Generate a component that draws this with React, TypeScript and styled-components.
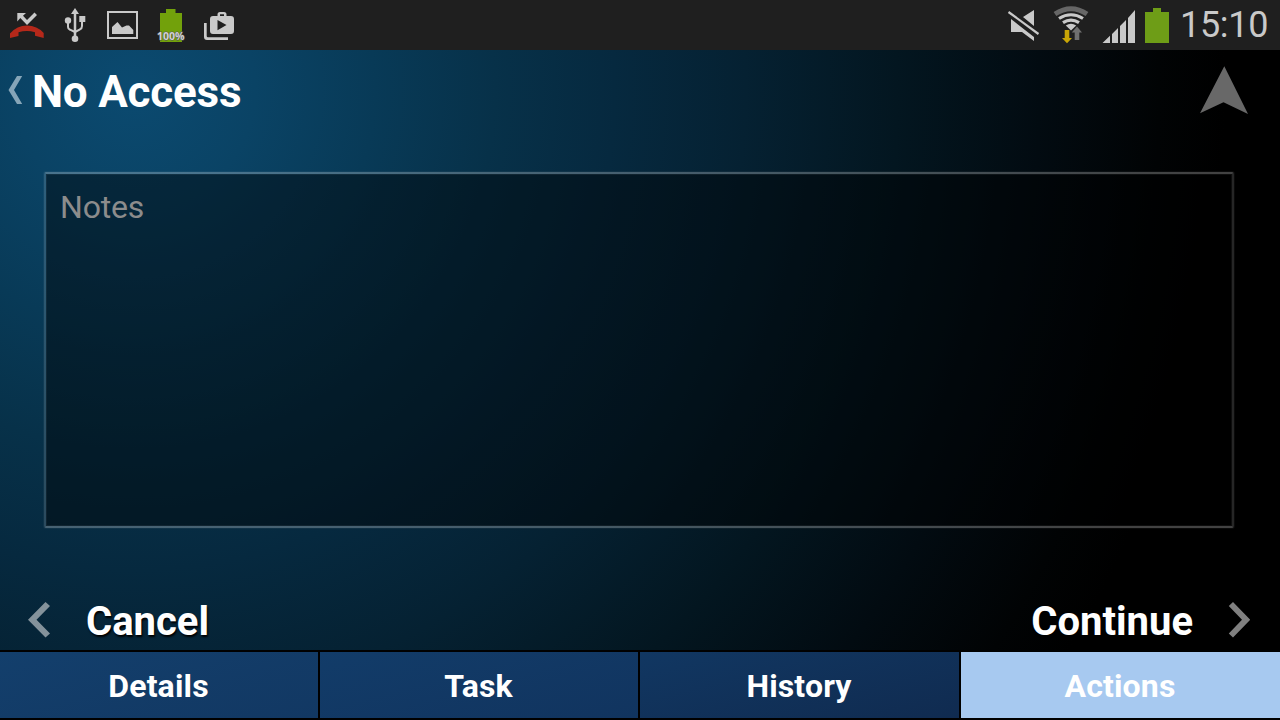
import React from "react";
import styled, { createGlobalStyle } from "styled-components";

const GlobalStyle = createGlobalStyle`
  * { box-sizing: border-box; }
  body { margin: 0; background: #000; font-family: Roboto, "Liberation Sans", sans-serif; }
  svg { display: block; flex: none; }
`;

const Screen = styled.div`
  width: 1280px;
  height: 720px;
  display: flex;
  flex-direction: column;
  overflow: hidden;
`;

const StatusBar = styled.header`
  height: 50px;
  flex: none;
  display: flex;
  justify-content: space-between;
  background: #1f1f1f;
  color: #c9c9c9;
`;

const StatusGroup = styled.div`
  display: flex;
`;

const Clock = styled.time`
  width: 108px;
  padding-left: 8px;
  font-size: 36px;
  line-height: 50px;
  letter-spacing: -0.3px;
  white-space: nowrap;
`;

const Page = styled.main`
  flex: 1;
  display: flex;
  flex-direction: column;
  background: radial-gradient(circle 1090px at 135px 40px,
    #0b4a70 0%, #0a4365 11%, #083a57 22%, #073149 33%, #06293f 44%, #052132 56%, #031620 70%, #020b11 83%, #010304 94%, #000 100%);
`;

const TitleBar = styled.div`
  height: 122px;
  display: flex;
  padding: 16px 32px 0 8px;
`;

const Title = styled.h1`
  margin: 0 auto 0 9px;
  font-size: 44px;
  line-height: 52px;
  font-weight: 700;
  letter-spacing: -0.2px;
  color: #fff;
`;

const Notes = styled.textarea`
  display: block;
  flex: none;
  width: 1190px;
  height: 356px;
  margin: 0 0 1px 44px;
  padding: 14px 14px;
  resize: none;
  outline: none;
  border: 2px solid;
  border-color: rgba(255, 255, 255, 0.26) rgba(255, 255, 255, 0.15);
  border-radius: 2px;
  background: rgba(0, 0, 0, 0.43);
  background-clip: padding-box;
  box-shadow: inset 0 0 0 1px rgba(255, 255, 255, 0.05), 0 0 0 1px rgba(255, 255, 255, 0.04);
  font: 400 32px/38px Roboto, sans-serif;
  letter-spacing: -0.2px;
  color: #fff;
  &::placeholder { color: #8c8c8c; opacity: 1; }
`;

const Wizard = styled.nav`
  flex: 1;
  display: flex;
  justify-content: space-between;
  padding: 73px 30px 0 28px;
`;

const WizardButton = styled.button`
  display: flex;
  gap: 35px;
  height: 48px;
  padding: 0;
  border: 0;
  background: none;
  color: #fff;
  font: 700 40px/40px Roboto, sans-serif;
  text-shadow: 1px 2px 2px #000;
`;

const Tabs = styled.nav`
  height: 70px;
  flex: none;
  display: grid;
  grid-template-columns: 318px 318px 319px 319px;
  gap: 2px;
  padding: 2px 0;
  background: #000;
`;

const Tab = styled.button<{ $from: string; $to: string }>`
  border: 0;
  padding: 2px 1px 0 0;
  background: linear-gradient(165deg, ${(p) => p.$from}, ${(p) => p.$to});
  color: #fff;
  font: 700 32px/38px Roboto, sans-serif;
  letter-spacing: 0.15px;
`;

const tabs = [
  { label: "Details", from: "#133f6c", to: "#123863" },
  { label: "Task", from: "#123c69", to: "#11345f" },
  { label: "History", from: "#113762", to: "#102b50" },
  { label: "Actions", from: "#a7c9f0", to: "#a7c9f0" },
];

const Notifications = () => (
  <svg width="250" height="50" viewBox="0 0 250 50" fill="#c9c9c9">
    <path d="M10 38 V33.5 Q17 25.5 27 25.5 Q37 25.5 43.7 33 V38 L35 35.7 V32.3 Q27 29.8 18.5 32.3 V36 Z" fill="#b5281a" />
    <path d="M17.3 13 H26 L23 15.7 L27 20 L34.5 12.5 L37 15 L27 25 L20.3 18 L17.3 21.5 Z" />
    <g fill="none" stroke="#c9c9c9" strokeWidth="2">
      <path d="M75 12 V38" strokeWidth="2.5" />
      <path d="M68 21 V27 Q68 29 70 29.7 L75 32 M82 20 V26 Q82 28.5 80 29.3 L75 32" />
    </g>
    <path d="M75 8 L79 14 H71 Z" />
    <circle cx="68" cy="20.5" r="3.2" />
    <circle cx="75" cy="38.7" r="3.3" />
    <path d="M79.3 16 H85.3 V22 H79.3 Z" />
    <path d="M108 12 H137 V38 H108 Z" fill="none" stroke="#c9c9c9" strokeWidth="2" />
    <path d="M112 34 V27 L117.5 22 L122 27.5 L126.5 25.5 H129 L133.3 30 V34 Z" />
    <path d="M160 13 H166 V9 H175.5 V13 H182 V42 H160 Z" fill="#72a10b" />
    <text x="157" y="40" textLength="27.5" lengthAdjust="spacingAndGlyphs" fontFamily="Open Sans" fontSize="11" fontWeight="700" fill="#d2d2d2" stroke="#555" strokeWidth="1" paintOrder="stroke">100%</text>
    <path d="M204 23 H206.7 V36 Q206.7 37.3 208 37.3 H228 V40 H207 Q204 40 204 37 Z" />
    <path fillRule="evenodd" d="M213 16 H217.5 V14.5 Q217.5 12 220 12 H224 Q226.5 12 226.5 14.5 V16 H231 Q234 16 234 19 V31 Q234 34 231 34 H213 Q210 34 210 31 V19 Q210 16 213 16 Z M220 16 H224 V14.3 H220 Z M217.5 20 V30.3 L226.5 25 Z" />
  </svg>
);

const SystemIcons = () => (
  <svg width="172" height="50" viewBox="1000 0 172 50" fill="#c9c9c9">
    <path d="M1011 19 L1034 37 V41 L1022 32 H1011 Z M1023 17 L1034 10 V26 Z" />
    <path d="M1008.5 12 L1038.5 34.5" stroke="#1f1f1f" strokeWidth="6" />
    <path d="M1008.5 12 L1038.5 34" stroke="#c9c9c9" strokeWidth="2.2" />
    <g fill="none" stroke="#c9c9c9" strokeWidth="3.2">
      <path d="M1055 14 Q1071 3.5 1087 14" stroke="#666" strokeWidth="5" />
      <path d="M1059 18.5 Q1071 11 1083 18.5" />
      <path d="M1063 22.7 Q1071 17.5 1079 22.7" />
    </g>
    <path d="M1065.8 25.5 Q1071 22 1076.2 25.5 L1071 30.5 Z" />
    <path d="M1064.7 30 H1069.3 V38 H1072 L1067 43.3 L1062 38 H1064.7 Z" fill="#c9a606" />
    <path d="M1074.7 40 H1079.3 V32.5 H1082 L1077 26.5 L1071.7 32.5 H1074.7 Z" fill="#707070" />
    <path d="M1102.5 43 L1110 35.7 V43 Z M1112 34 L1118 28 V43 H1112 Z M1120 26 L1126 20 V43 H1120 Z M1128 18 L1135 10 V43 H1128 Z" />
    <path d="M1145 12 H1153 V8 H1161 V12 H1169 V43 H1145 Z" fill="#6e9d17" />
  </svg>
);

export default function App() {
  return (
    <Screen>
      <GlobalStyle />
      <StatusBar>
        <StatusGroup>
          <Notifications />
        </StatusGroup>
        <StatusGroup>
          <SystemIcons />
          <Clock>15:10</Clock>
        </StatusGroup>
      </StatusBar>
      <Page>
        <TitleBar>
          <svg width="15" height="48" viewBox="8 66 15 48">
            <path d="M17 76 H22.2 L14 90 L22.2 104 H17 L8.5 90 Z" fill="#86a5b8" />
          </svg>
          <Title>No Access</Title>
          <svg width="48" height="48" viewBox="1200 66 48 48">
            <path d="M1224.3 66.3 L1248 114 L1223.5 102.3 L1200 113.3 Z" fill="#686868" />
          </svg>
        </TitleBar>
        <Notes placeholder="Notes" />
        <Wizard>
          <WizardButton>
            <svg width="23" height="37" viewBox="28 602 23 37">
              <path d="M45.5 602 L50 606 L36.5 619.7 L50 633.5 L45.5 637.5 L28 619.7 Z" fill="#84929b" />
            </svg>
            Cancel
          </WizardButton>
          <WizardButton>
            Continue
            <svg width="22" height="37" viewBox="1228 602 22 37">
              <path d="M1233 602 L1228.8 606 L1242 619.7 L1228.8 633.5 L1233 637.5 L1250.3 619.7 Z" fill="#808080" />
            </svg>
          </WizardButton>
        </Wizard>
        <Tabs>
          {tabs.map((t) => (
            <Tab key={t.label} $from={t.from} $to={t.to}>{t.label}</Tab>
          ))}
        </Tabs>
      </Page>
    </Screen>
  );
}
